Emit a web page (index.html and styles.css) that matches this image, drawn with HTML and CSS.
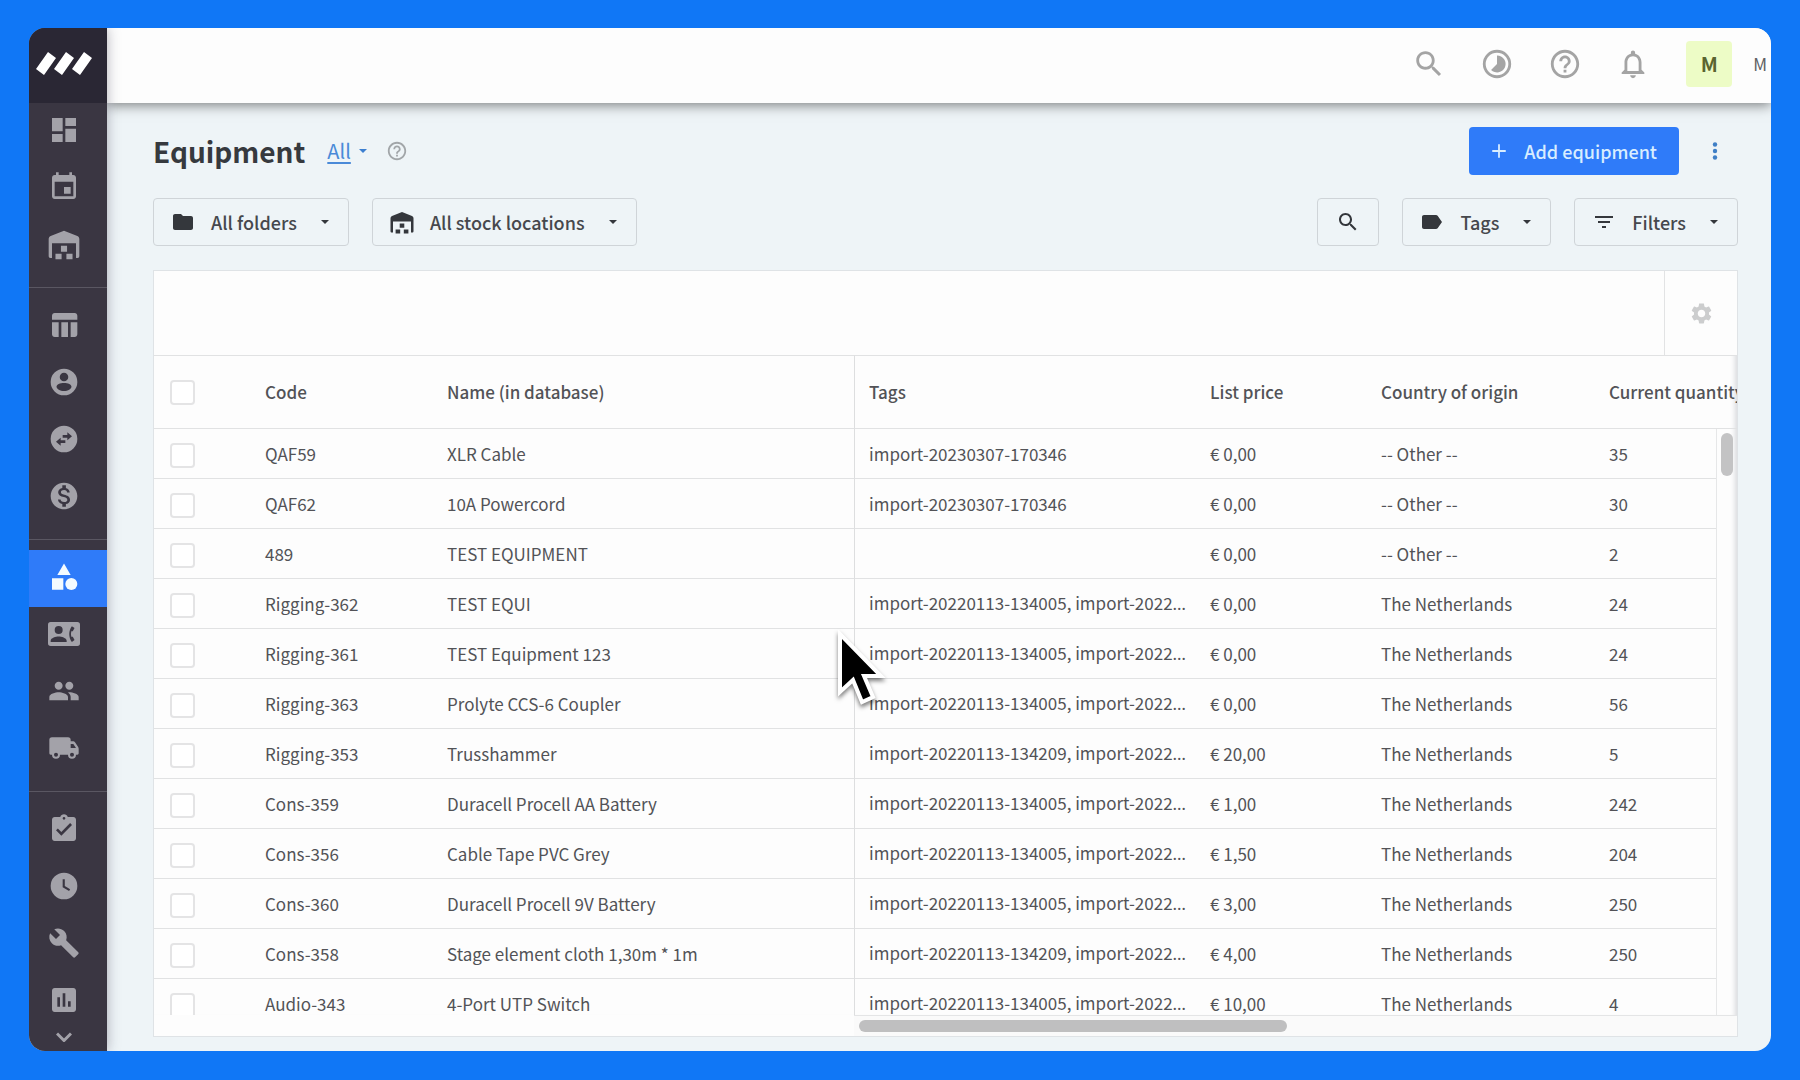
FILE: index.html
```html
<!DOCTYPE html>
<html lang="en">
<head>
<meta charset="utf-8">
<title>Equipment</title>
<link rel="stylesheet" href="styles.css">
</head>
<body>
<svg class="sprite" aria-hidden="true">
  <symbol id="search" viewBox="0 0 24 24"><path d="M15.5 14h-.79l-.28-.27C15.41 12.59 16 11.11 16 9.5 16 5.91 13.09 3 9.5 3S3 5.91 3 9.5 5.91 16 9.5 16c1.61 0 3.09-.59 4.23-1.57l.27.28v.79l5 4.99L20.49 19l-4.99-5zm-6 0C7.01 14 5 11.99 5 9.5S7.01 5 9.5 5 14 7.01 14 9.5 11.99 14 9.5 14z"/></symbol>
  <symbol id="help" viewBox="0 0 24 24"><path d="M11 18h2v-2h-2v2zm1-16C6.48 2 2 6.48 2 12s4.480 10 10 10 10-4.480 10-10S17.520 2 12 2zm0 18c-4.410 0-8-3.590-8-8s3.590-8 8-8 8 3.590 8 8-3.590 8-8 8zm0-14c-2.210 0-4 1.790-4 4h2c0-1.100.9-2 2-2s2 .9 2 2c0 2-3 1.750-3 5h2c0-2.250 3-2.500 3-5 0-2.210-1.790-4-4-4z"/></symbol>
  <symbol id="warehouse" viewBox="0 -1 24 24"><path d="M12 1 2 5C1 5.500.5 6.300.5 7.500V20c0 1 .5 1.500 1.200 1.500H3V10.500h18v11h1.300c.7 0 1.200-.5 1.200-1.500V7.500c0-1.200-.5-2-1.500-2.500zM9.700 12.400h4.600v4.400H9.700zM5.600 18.400h4.600v4H5.600zM13.800 18.400h4.600v4h-4.600z"/></symbol>
  <symbol id="caret" viewBox="0 0 24 24"><path d="M6 9h12l-6 6z"/></symbol>
</svg>
<div class="window">
  <nav class="sidebar" aria-label="Main">
    <a class="logo" href="#" aria-label="Home">
      <svg viewBox="0 0 56 23"><path d="M12 0l8 6L8 23 0 17zM30 0l8 6-12 17-8-6zM48 0l8 6-12 17-8-6z"/></svg>
    </a>
    <div class="group">
      <a href="#" aria-label="Dashboard"><svg viewBox="0 0 24 24"><path d="M3 13h8V3H3v10zm0 8h8v-6H3v6zm10 0h8V11h-8v10zm0-18v6h8V3h-8z"/></svg></a>
      <a href="#" aria-label="Calendar"><svg viewBox="0 0 24 24"><path d="M17 12h-5v5h5v-5zM16 1v2H8V1H6v2H5c-1.110 0-1.990.9-1.990 2L3 19c0 1.100.89 2 2 2h14c1.100 0 2-.9 2-2V5c0-1.100-.9-2-2-2h-1V1h-2zm3 18H5V8h14v11z"/></svg></a>
      <a href="#" aria-label="Warehouse"><svg><use href="#warehouse"/></svg></a>
    </div>
    <div class="group">
      <a href="#" aria-label="Projects"><svg viewBox="0 0 24 24"><path d="M10 10.020h5V21h-5zM17 21h3c1.100 0 2-.9 2-2v-9h-5v11zM20 3H5c-1.100 0-2 .9-2 2v3h19V5c0-1.100-.9-2-2-2zM3 19c0 1.100.9 2 2 2h3V10H3v9z"/></svg></a>
      <a href="#" aria-label="Account"><svg viewBox="0 0 24 24"><path fill-rule="evenodd" d="M12 2a10 10 0 1 0 0 20 10 10 0 0 0 0-20zM12 5a3.200 3.200 0 1 1 0 6.400A3.200 3.200 0 0 1 12 5zM12 12.800c3 0 5.600 1.100 5.600 2.800s-2.600 3.200-5.600 3.200-5.600-1.500-5.600-3.200 2.600-2.800 5.600-2.800z"/></svg></a>
      <a href="#" aria-label="Transfers"><svg viewBox="0 0 24 24"><path fill-rule="evenodd" d="M12 2a10 10 0 1 0 0 20 10 10 0 0 0 0-20zM14.500 7l3.500 3-3.500 3v-2H11V9h3.500zM9.500 11v2H13v2H9.500v2L6 14z"/></svg></a>
      <a href="#" aria-label="Finance"><svg viewBox="0 0 24 24"><path d="M12 2C6.480 2 2 6.480 2 12s4.480 10 10 10 10-4.480 10-10S17.520 2 12 2zm1.410 16.090V20h-2.670v-1.930c-1.710-.36-3.160-1.460-3.270-3.400h1.960c.1 1.050.82 1.870 2.650 1.870 1.960 0 2.400-.98 2.400-1.590 0-.83-.44-1.610-2.670-2.140-2.480-.6-4.180-1.620-4.180-3.670 0-1.720 1.390-2.840 3.110-3.210V4h2.670v1.950c1.860.45 2.790 1.860 2.850 3.390H14.300c-.05-1.110-.64-1.870-2.220-1.870-1.500 0-2.400.68-2.400 1.640 0 .84.65 1.390 2.670 1.910s4.180 1.390 4.180 3.910c-.01 1.830-1.380 2.830-3.120 3.160z"/></svg></a>
    </div>
    <div class="group">
      <a class="active" href="#" aria-label="Equipment" aria-current="page"><svg viewBox="0 0 24 24"><path d="M12 1.800l5 8.700H7zM3 13h8.500v8.500H3z"/><circle cx="17.500" cy="17.300" r="4.500"/></svg></a>
      <a href="#" aria-label="Contacts"><svg viewBox="0 0 24 24"><path fill-rule="evenodd" d="M2 3h20a2 2 0 0 1 2 2v14a2 2 0 0 1-2 2H2a2 2 0 0 1-2-2V5a2 2 0 0 1 2-2zM8 6a3 3 0 1 0 0 6 3 3 0 0 0 0-6zM2 18h12v-1c0-2-4-3.100-6-3.100S2 15 2 17zM19.900 7.500 17.900 6.200C15.300 9.500 15.300 14.500 17.900 18l2-1.500-1.300-2.500h-1.100a7 7 0 0 1 0-4h1.100z"/></svg></a>
      <a href="#" aria-label="Crew"><svg viewBox="0 0 24 24"><path d="M16 11c1.660 0 2.990-1.340 2.990-3S17.660 5 16 5c-1.660 0-3 1.340-3 3s1.340 3 3 3zm-8 0c1.660 0 2.990-1.340 2.990-3S9.660 5 8 5C6.340 5 5 6.340 5 8s1.340 3 3 3zm0 2c-2.330 0-7 1.170-7 3.500V19h14v-2.500c0-2.330-4.670-3.500-7-3.500zm8 0c-.29 0-.62.02-.97.05 1.160.84 1.970 1.970 1.970 3.450V19h6v-2.500c0-2.330-4.670-3.500-7-3.500z"/></svg></a>
      <a href="#" aria-label="Vehicles"><svg viewBox="0 0 24 24"><path fill-rule="evenodd" d="M3 4h12a2 2 0 0 1 2 2v1h1.500c.8 0 1.500.4 2 1l2 3c.3.400.5 1 .5 1.500V16c0 .600-.4 1-1 1h-1a3 3 0 0 1-6 0H9a3 3 0 0 1-6 0H2a1 1 0 0 1-1-1V6a2 2 0 0 1 2-2zM17 9v3h4l-2-3zM6 15.500a1.500 1.500 0 1 0 0 3 1.500 1.500 0 0 0 0-3zM18 15.500a1.500 1.500 0 1 0 0 3 1.500 1.500 0 0 0 0-3z"/></svg></a>
    </div>
    <div class="group">
      <a href="#" aria-label="Tasks"><svg viewBox="0 0 24 24"><path d="M19 3h-4.180C14.400 1.840 13.300 1 12 1c-1.300 0-2.400.84-2.820 2H5c-1.100 0-2 .9-2 2v14c0 1.100.9 2 2 2h14c1.100 0 2-.9 2-2V5c0-1.100-.9-2-2-2zm-7 0c.55 0 1 .45 1 1s-.45 1-1 1-1-.45-1-1 .45-1 1-1zm-2 14l-4-4 1.410-1.410L10 14.170l6.590-6.590L18 9l-8 8z"/></svg></a>
      <a href="#" aria-label="Time"><svg viewBox="0 0 24 24"><path fill-rule="evenodd" d="M12 2a10 10 0 1 0 0 20 10 10 0 0 0 0-20zM11 7h1.600v5l4 2.400-.8 1.300L11 13z"/></svg></a>
      <a href="#" aria-label="Maintenance"><svg viewBox="0 0 24 24"><path d="M22.700 19l-9.100-9.100c.9-2.300.4-5-1.500-6.900-2-2-5-2.400-7.400-1.300L9 6 6 9 1.600 4.700C.4 7.100.9 10.100 2.900 12.100c1.900 1.900 4.600 2.400 6.900 1.500l9.100 9.100c.4.400 1 .4 1.400 0l2.300-2.300c.5-.4.5-1.100.1-1.400z"/></svg></a>
      <a href="#" aria-label="Reports"><svg viewBox="0 0 24 24"><path d="M19 3H5c-1.100 0-2 .9-2 2v14c0 1.100.9 2 2 2h14c1.100 0 2-.9 2-2V5c0-1.100-.9-2-2-2zM9 17H7v-7h2v7zm4 0h-2V7h2v10zm4 0h-2v-4h2v4z"/></svg></a>
    </div>
    <button class="more" aria-label="More"><svg viewBox="0 0 16 10"><path d="M1 1.500l7 7 7-7"/></svg></button>
  </nav>
  <div class="main">
    <header class="topbar">
      <button aria-label="Search"><svg><use href="#search"/></svg></button>
      <button aria-label="Activity"><svg viewBox="0 0 24 24"><path d="M12 2a10 10 0 1 0 0 20 10 10 0 0 0 0-20zm0 18a8 8 0 1 1 0-16 8 8 0 0 1 0 16z"/><path d="M12 6a6 6 0 1 1-4.200 10.200L12 12z"/></svg></button>
      <button aria-label="Help"><svg><use href="#help"/></svg></button>
      <button aria-label="Notifications"><svg viewBox="0 0 24 24"><path d="M12 22c1.100 0 2-.9 2-2h-4c0 1.100.9 2 2 2zm6-6v-5c0-3.070-1.630-5.640-4.500-6.320V4c0-.83-.67-1.500-1.500-1.500s-1.500.67-1.500 1.500v.68C7.640 5.360 6 7.920 6 11v5l-2 2v1h16v-1l-2-2zm-2 1H8v-6c0-2.480 1.510-4.500 4-4.500s4 2.020 4 4.500v6z"/></svg></button>
      <span class="avatar">M</span>
      <span class="user">M</span>
    </header>
    <main class="content">
      <div class="title-row">
        <h1>Equipment</h1>
        <a class="view" href="#">All</a>
        <svg class="caret blue"><use href="#caret"/></svg>
        <svg class="hint"><use href="#help"/></svg>
        <button class="primary push"><svg viewBox="0 0 24 24"><path d="M13.200 3v7.800H21v2.400h-7.800V21h-2.400v-7.800H3v-2.400h7.800V3z"/></svg>Add equipment</button>
        <button class="dots" aria-label="More actions"><svg viewBox="0 0 6 18"><circle cx="3" cy="2.500" r="2.200"/><circle cx="3" cy="9" r="2.200"/><circle cx="3" cy="15.500" r="2.200"/></svg></button>
      </div>
      <div class="filters">
        <button class="filter"><svg viewBox="0 0 24 24"><path d="M10 4H4c-1.100 0-2 .9-2 2v12c0 1.100.9 2 2 2h16c1.100 0 2-.9 2-2V8c0-1.100-.9-2-2-2h-8l-2-2z"/></svg>All folders<svg class="caret"><use href="#caret"/></svg></button>
        <button class="filter"><svg><use href="#warehouse"/></svg>All stock locations<svg class="caret"><use href="#caret"/></svg></button>
        <button class="filter only push" aria-label="Search equipment"><svg><use href="#search"/></svg></button>
        <button class="filter"><svg viewBox="0 0 24 24"><path d="M17.630 5.840C17.270 5.330 16.670 5 16 5L4 5c-1.100 0-2 .9-2 2v10c0 1.100.9 2 2 2h12c.67 0 1.270-.33 1.630-.84L22 12l-4.370-6.160z"/></svg>Tags<svg class="caret"><use href="#caret"/></svg></button>
        <button class="filter"><svg viewBox="0 0 24 24"><path d="M10 18h4v-2h-4v2zM3 6v2h18V6H3zm3 7h12v-2H6v2z"/></svg>Filters<svg class="caret"><use href="#caret"/></svg></button>
      </div>
      <section class="card">
        <div class="toolbar">
          <button aria-label="Table settings"><svg viewBox="0 0 24 24"><path d="M19.140 12.940c.04-.3.060-.61.060-.94 0-.32-.02-.64-.07-.94l2.030-1.580c.18-.14.230-.41.120-.61l-1.920-3.320c-.12-.22-.37-.29-.59-.22l-2.390.96c-.5-.38-1.030-.7-1.620-.94l-.36-2.540c-.04-.24-.24-.41-.48-.41h-3.840c-.24 0-.43.17-.47.410l-.36 2.540c-.59.240-1.130.57-1.620.94l-2.390-.96c-.22-.08-.47 0-.59.220L2.740 8.870c-.12.210-.08.470.12.610l2.030 1.580c-.05.3-.09.63-.09.940s.02.640.070.940l-2.030 1.580c-.18.140-.23.410-.12.610l1.920 3.320c.12.220.37.290.59.220l2.390-.96c.5.380 1.030.7 1.620.94l.36 2.540c.05.240.24.410.48.410h3.840c.24 0 .44-.17.470-.41l.36-2.540c.59-.24 1.130-.56 1.620-.94l2.390.96c.22.080.47 0 .59-.22l1.920-3.320c.12-.22.070-.47-.12-.61l-2.010-1.580zM12 15.600c-1.980 0-3.600-1.620-3.600-3.600s1.620-3.600 3.600-3.600 3.600 1.620 3.600 3.600-1.620 3.600-3.600 3.600z"/></svg></button>
        </div>
        <div class="grid">
          <table>
            <colgroup><col class="c-check"><col class="c-code"><col class="c-name"><col class="c-tags"><col class="c-price"><col class="c-country"><col><col class="c-scroll"></colgroup>
            <thead>
              <tr><th><input type="checkbox" aria-label="Select all"></th><th>Code</th><th>Name (in database)</th><th>Tags</th><th>List price</th><th>Country of origin</th><th colspan="2">Current quantity</th></tr>
            </thead>
            <tbody>
              <tr><td><input type="checkbox" aria-label="Select QAF59"></td><td>QAF59</td><td>XLR Cable</td><td>import-20230307-170346</td><td>€ 0,00</td><td>-- Other --</td><td>35</td><td></td></tr>
              <tr><td><input type="checkbox" aria-label="Select QAF62"></td><td>QAF62</td><td>10A Powercord</td><td>import-20230307-170346</td><td>€ 0,00</td><td>-- Other --</td><td>30</td><td></td></tr>
              <tr><td><input type="checkbox" aria-label="Select 489"></td><td>489</td><td>TEST EQUIPMENT</td><td></td><td>€ 0,00</td><td>-- Other --</td><td>2</td><td></td></tr>
              <tr><td><input type="checkbox" aria-label="Select Rigging-362"></td><td>Rigging-362</td><td>TEST EQUI</td><td>import-20220113-134005, import-2022<span class="cut">…</span></td><td>€ 0,00</td><td>The Netherlands</td><td>24</td><td></td></tr>
              <tr><td><input type="checkbox" aria-label="Select Rigging-361"></td><td>Rigging-361</td><td>TEST Equipment 123</td><td>import-20220113-134005, import-2022<span class="cut">…</span></td><td>€ 0,00</td><td>The Netherlands</td><td>24</td><td></td></tr>
              <tr><td><input type="checkbox" aria-label="Select Rigging-363"></td><td>Rigging-363</td><td>Prolyte CCS-6 Coupler</td><td>import-20220113-134005, import-2022<span class="cut">…</span></td><td>€ 0,00</td><td>The Netherlands</td><td>56</td><td></td></tr>
              <tr><td><input type="checkbox" aria-label="Select Rigging-353"></td><td>Rigging-353</td><td>Trusshammer</td><td>import-20220113-134209, import-2022<span class="cut">…</span></td><td>€ 20,00</td><td>The Netherlands</td><td>5</td><td></td></tr>
              <tr><td><input type="checkbox" aria-label="Select Cons-359"></td><td>Cons-359</td><td>Duracell Procell AA Battery</td><td>import-20220113-134005, import-2022<span class="cut">…</span></td><td>€ 1,00</td><td>The Netherlands</td><td>242</td><td></td></tr>
              <tr><td><input type="checkbox" aria-label="Select Cons-356"></td><td>Cons-356</td><td>Cable Tape PVC Grey</td><td>import-20220113-134005, import-2022<span class="cut">…</span></td><td>€ 1,50</td><td>The Netherlands</td><td>204</td><td></td></tr>
              <tr><td><input type="checkbox" aria-label="Select Cons-360"></td><td>Cons-360</td><td>Duracell Procell 9V Battery</td><td>import-20220113-134005, import-2022<span class="cut">…</span></td><td>€ 3,00</td><td>The Netherlands</td><td>250</td><td></td></tr>
              <tr><td><input type="checkbox" aria-label="Select Cons-358"></td><td>Cons-358</td><td>Stage element cloth 1,30m * 1m</td><td>import-20220113-134209, import-2022<span class="cut">…</span></td><td>€ 4,00</td><td>The Netherlands</td><td>250</td><td></td></tr>
              <tr><td><input type="checkbox" aria-label="Select Audio-343"></td><td>Audio-343</td><td>4-Port UTP Switch</td><td>import-20220113-134005, import-2022<span class="cut">…</span></td><td>€ 10,00</td><td>The Netherlands</td><td>4</td><td></td></tr>
            </tbody>
          </table>
          <div class="v-thumb"></div>
        </div>
        <div class="h-scroll"><div class="h-track"><div class="h-thumb"></div></div></div>
      </section>
    </main>
  </div>
</div>
<svg class="pointer" viewBox="0 0 52 78" aria-hidden="true"><path d="M3 4v58l13-12 9 22 11-5-9-21h17z"/></svg>
</body>
</html>
```
FILE: styles.css
```css
* {
  box-sizing: border-box;
}

body {
  margin: 0;
  height: 100vh;
  padding: 28px 29px 29px;
  background: #1077f6;
  color: #525357;
  font: 17px/24px "Noto Sans CJK SC", "Noto Sans", sans-serif;
}

button {
  border: 0;
  padding: 0;
  background: none;
  color: inherit;
  font: inherit;
  cursor: pointer;
}

svg {
  display: block;
  flex: none;
  fill: currentColor;
}

.sprite {
  position: absolute;
  width: 0;
  height: 0;
}

.push {
  margin-left: auto;
}

.window {
  display: flex;
  height: 100%;
  border-radius: 16px;
  overflow: hidden;
  background: #eef4f7;
}

/* Sidebar */
.sidebar {
  display: flex;
  flex-direction: column;
  flex: none;
  width: 78px;
  background: #3a3642;
  color: #a3a2a9;
  box-shadow: 0 0 12px rgba(40, 36, 60, 0.35);
  z-index: 2;
}

.logo {
  display: flex;
  align-items: center;
  flex: none;
  height: 75px;
  padding: 0 0 4px 7px;
  background: #2a2734;
  color: #fff;
}

.logo svg {
  width: 56px;
  height: 23px;
}

.group + .group {
  margin-top: 13px;
  padding-top: 10px;
  border-top: 1px solid #5a5762;
}

.group a {
  display: flex;
  align-items: center;
  justify-content: center;
  height: 57px;
  padding: 0 8px 4px 0;
  color: inherit;
}

.group svg {
  width: 32px;
  height: 32px;
}

.group .active {
  background: #2f7bf9;
  color: #f4fbff;
}

.more {
  display: flex;
  justify-content: center;
  padding: 2px 8px 0 0;
}

.more svg {
  width: 16px;
  height: 10px;
  fill: none;
  stroke: currentColor;
  stroke-width: 3;
}

/* Top bar */
.main {
  display: flex;
  flex-direction: column;
  flex: 1;
  min-width: 0;
}

.topbar {
  display: flex;
  align-items: center;
  justify-content: flex-end;
  gap: 34px;
  flex: none;
  height: 75px;
  padding: 0 4px 4px 0;
  background: #fdfdfd;
  color: #a4a4a4;
  box-shadow: 0 2px 12px rgba(0, 0, 0, 0.5);
  z-index: 1;
}

.topbar svg {
  width: 34px;
  height: 34px;
}

.avatar {
  width: 46px;
  margin-left: 2px;
  border-radius: 4px;
  background: #edfcc6;
  color: #5a6430;
  font-size: 20px;
  font-weight: 700;
  line-height: 46px;
  text-align: center;
}

.user {
  margin-left: -13px;
  color: #5f6063;
}

/* Page */
.content {
  display: flex;
  flex-direction: column;
  flex: 1;
  min-height: 0;
  padding: 24px 33px 14px 46px;
}

.title-row {
  display: flex;
  align-items: center;
  height: 48px;
}

h1 {
  margin: 0;
  color: #36393e;
  font-size: 28px;
  font-weight: 700;
  line-height: 40px;
}

.view {
  margin-left: 22px;
  color: #4a8ad8;
  font-size: 20px;
  text-underline-offset: 3px;
}

.caret {
  width: 16px;
  height: 16px;
}

.caret.blue {
  margin-left: 4px;
  color: #3c7fd0;
}

.hint {
  width: 22px;
  height: 22px;
  margin-left: 15px;
  color: #a2a6a9;
}

.primary {
  display: flex;
  align-items: center;
  gap: 16px;
  height: 48px;
  padding: 0 22px 0 21px;
  border-radius: 4px;
  background: #2f7bf9;
  color: #d8edff;
  font-size: 18px;
  font-weight: 500;
}

.primary svg {
  width: 18px;
  height: 18px;
}

.dots {
  margin-left: 33px;
  padding-right: 20px;
  color: #3f7fc6;
}

.dots svg {
  width: 6px;
  height: 18px;
}

.filters {
  display: flex;
  gap: 23px;
  margin: 23px 0 24px;
}

.filter {
  display: flex;
  align-items: center;
  gap: 16px;
  height: 48px;
  padding: 0 15px 0 17px;
  border: 1px solid #cfd4d8;
  border-radius: 4px;
  color: #46484d;
  font-size: 18px;
  font-weight: 500;
}

.filter svg {
  width: 24px;
  height: 24px;
  color: #34373c;
}

.filter .caret {
  width: 16px;
  height: 16px;
  margin-left: 4px;
}

.filter.only {
  padding: 0 18px;
}

/* Equipment table */
.card {
  display: flex;
  flex-direction: column;
  flex: 1;
  min-height: 0;
  border: 1px solid #dfe3e6;
  background: #fdfdfd;
}

.toolbar {
  display: flex;
  justify-content: flex-end;
  flex: none;
  height: 84px;
}

.toolbar button {
  display: grid;
  place-items: center;
  width: 73px;
  border-left: 1px solid #e2e3e4;
  color: #cccdce;
}

.toolbar svg {
  width: 25px;
  height: 25px;
}

.grid {
  position: relative;
  flex: 1;
  min-height: 0;
  overflow: hidden;
  box-shadow: inset -6px 0 5px -4px #d8d9dd;
}

table {
  width: 100%;
  table-layout: fixed;
  border-collapse: separate;
  border-spacing: 0;
}

.c-check { width: 96px; }
.c-code { width: 182px; }
.c-name { width: 422px; }
.c-tags { width: 341px; }
.c-price { width: 171px; }
.c-country { width: 228px; }
.c-scroll { width: 21px; }

th,
td {
  height: 50px;
  padding: 0 0 0 15px;
  border-bottom: 1px solid #e1e2e3;
  overflow: hidden;
  text-align: left;
  text-overflow: ellipsis;
  white-space: nowrap;
}

th {
  height: 74px;
  border-top: 1px solid #e1e2e3;
  font-weight: 500;
}

th:last-child {
  text-overflow: clip;
}

th:nth-child(4),
td:nth-child(4) {
  padding-left: 14px;
  border-left: 1px solid #dddedf;
}

td:last-child {
  border-bottom: 0;
  border-left: 1px solid #e6e7e8;
}

.cut {
  font-family: "Noto Sans", sans-serif;
}

input {
  appearance: none;
  display: block;
  width: 25px;
  height: 25px;
  margin: 0 0 0 1px;
  border: 2px solid #e4e4e5;
  border-radius: 4px;
  background: #fff;
}

td input {
  margin-top: 3px;
}

.v-thumb {
  position: absolute;
  top: 78px;
  right: 4px;
  width: 12px;
  height: 43px;
  border-radius: 6px;
  background: #c3c3c4;
}

.h-scroll {
  display: flex;
  flex: none;
  height: 21px;
  padding-left: 700px;
}

.h-track {
  flex: 1;
  padding: 4px 20px 0 5px;
  border-top: 1px solid #e4e5e6;
  background: #fafafa;
}

.h-thumb {
  width: 50%;
  max-width: 428px;
  height: 12px;
  border-radius: 6px;
  background: #bfbfc0;
}

.pointer {
  position: absolute;
  top: 630px;
  left: 837px;
  width: 52px;
  height: 78px;
  fill: #000;
  stroke: #fff;
  stroke-width: 4;
  filter: drop-shadow(0 3px 2px rgba(0, 0, 0, 0.5));
}
```
